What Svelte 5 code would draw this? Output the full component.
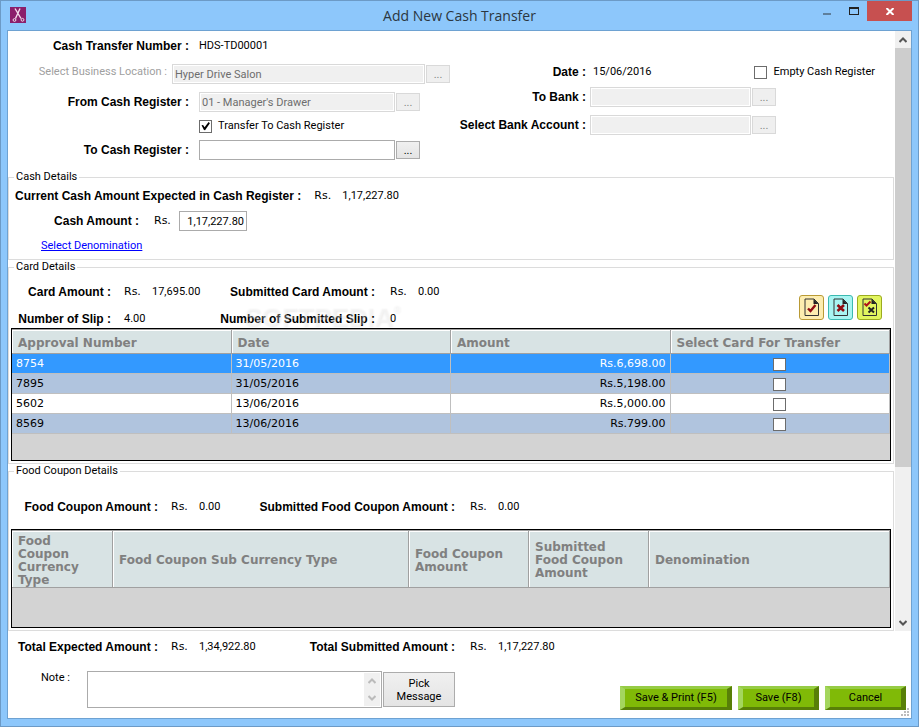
<script lang="ts">
  interface Card {
    approval: string;
    date: string;
    amount: string;
    checked: boolean;
  }

  let transferToRegister = $state(true);
  let emptyRegister = $state(false);
  let cashAmount = $state("1,17,227.80");
  let toRegister = $state("");
  let note = $state("");
  let selected = $state(0);

  let cards: Card[] = $state([
    { approval: "8754", date: "31/05/2016", amount: "Rs.6,698.00", checked: false },
    { approval: "7895", date: "31/05/2016", amount: "Rs.5,198.00", checked: false },
    { approval: "5602", date: "13/06/2016", amount: "Rs.5,000.00", checked: false },
    { approval: "8569", date: "13/06/2016", amount: "Rs.799.00", checked: false },
  ]);

  function setAll(fn: (c: Card) => boolean) {
    cards.forEach((c) => (c.checked = fn(c)));
  }
</script>

{#snippet chevron(up: boolean)}
  <svg class="chevron" class:down={!up} viewBox="0 0 8 6" aria-hidden="true">
    <path d="M0.5 5 L4 1.5 L7.5 5" />
  </svg>
{/snippet}

{#snippet page()}
  <path d="M6 4 H15 L19.5 8.5 V20.5 H6 Z" fill="none" stroke="#333" />
  <path d="M14.5 4 L19.5 9 H14.5 Z" fill="#222" />
{/snippet}

<div class="window">
  <header>
    <svg class="logo" viewBox="0 0 16 16" aria-hidden="true">
      <rect width="16" height="16" fill="#8b1f6b" />
      <g fill="none" stroke="#f3dcec">
        <path d="M5 1.5 L11 11.5 M10 1.5 L5.5 11.5" stroke-width="1.4" />
        <circle cx="4.5" cy="13" r="1.4" />
        <circle cx="12.5" cy="12.8" r="1.4" />
      </g>
    </svg>
    <h1>Add New Cash Transfer</h1>
    <div class="controls">
      <button class="min" aria-label="Minimize"><span></span></button>
      <button class="max" aria-label="Maximize"><span></span></button>
      <button class="close" aria-label="Close">
        <svg viewBox="0 0 8 7" aria-hidden="true">
          <path d="M0.5 0 L7.5 7 M7.5 0 L0.5 7" />
        </svg>
      </button>
    </div>
  </header>

  <main>
    <div class="scroller">
      <div class="content">
        <div class="form">
          <div class="left">
            <div class="row">
              <span class="label">Cash Transfer Number :</span>
              <span>HDS-TD00001</span>
            </div>
            <div class="row">
              <label class="label short" for="location">Select Business Location :</label>
              <input id="location" class="wide" value="Hyper Drive Salon" disabled />
              <button class="more" disabled>...</button>
            </div>
            <div class="row">
              <label class="label" for="from">From Cash Register :</label>
              <input id="from" value="01 - Manager's Drawer" disabled />
              <button class="more" disabled>...</button>
            </div>
            <div class="row check">
              <input id="transfer" type="checkbox" bind:checked={transferToRegister} />
              <label for="transfer">Transfer To Cash Register</label>
            </div>
            <div class="row">
              <label class="label" for="to">To Cash Register :</label>
              <input id="to" bind:value={toRegister} />
              <button class="more">...</button>
            </div>
          </div>

          <div class="right">
            <div class="row date">
              <span class="label">Date :</span>
              <span class="value">15/06/2016</span>
              <input id="empty" type="checkbox" bind:checked={emptyRegister} />
              <label for="empty">Empty Cash Register</label>
            </div>
            <div class="row">
              <label class="label" for="bank">To Bank :</label>
              <input id="bank" disabled />
              <button class="more" disabled>...</button>
            </div>
            <div class="row">
              <label class="label" for="account">Select Bank Account :</label>
              <input id="account" disabled />
              <button class="more" disabled>...</button>
            </div>
          </div>
        </div>

        <fieldset class="cash">
          <legend>Cash Details</legend>
          <div class="row expected">
            <b>Current Cash Amount Expected in Cash Register :</b>
            <span class="rs">Rs.</span>
            <span>1,17,227.80</span>
          </div>
          <div class="row entry">
            <label class="label" for="cash">Cash Amount :</label>
            <span class="rs">Rs.</span>
            <input id="cash" bind:value={cashAmount} />
          </div>
          <div class="row">
            <a href="#denomination">Select Denomination</a>
          </div>
        </fieldset>

        <fieldset>
          <legend>Card Details</legend>
          <div class="summary">
            <div class="stats cardstats">
              <b>Card Amount :</b>
              <span class="rs">Rs.</span>
              <span>17,695.00</span>
              <b>Submitted Card Amount :</b>
              <span class="rs">Rs.</span>
              <span>0.00</span>
              <b>Number of Slip :</b>
              <span class="span">4.00</span>
              <b>Number of Submitted Slip :</b>
              <span class="span">0</span>
            </div>
            <span class="watermark" aria-hidden="true">SOFTPEDIA<small>®</small></span>
            <div class="tools">
              <button class="all" aria-label="Select all" onclick={() => setAll(() => true)}>
                <svg viewBox="0 0 25 25">
                  {@render page()}
                  <path d="M9 13.5 L11.5 16 L16.5 10" fill="none" stroke="#900c12" stroke-width="2.4" />
                </svg>
              </button>
              <button class="none" aria-label="Clear all" onclick={() => setAll(() => false)}>
                <svg viewBox="0 0 25 25">
                  {@render page()}
                  <path d="M9.5 10 L16 16 M16 10 L9.5 16" stroke="#900c12" stroke-width="2.6" />
                </svg>
              </button>
              <button class="swap" aria-label="Invert selection" onclick={() => setAll((c) => !c.checked)}>
                <svg viewBox="0 0 25 25">
                  {@render page()}
                  <path d="M7.5 8.5 L9.5 10.5 L13.5 6.5" fill="none" stroke="#b01218" stroke-width="2" />
                  <path d="M11.5 12.5 L17 17.5 M17 12.5 L11.5 17.5" stroke="#222" stroke-width="2" />
                </svg>
              </button>
            </div>
          </div>

          <div class="grid cards">
            <table>
              <thead>
                <tr>
                  <th>Approval Number</th>
                  <th>Date</th>
                  <th>Amount</th>
                  <th>Select Card For Transfer</th>
                </tr>
              </thead>
              <tbody>
                {#each cards as card, i (card.approval)}
                  <tr class:selected={i === selected} onclick={() => (selected = i)}>
                    <td>{card.approval}</td>
                    <td>{card.date}</td>
                    <td class="amount">{card.amount}</td>
                    <td class="pick">
                      <input type="checkbox" aria-label={card.approval} bind:checked={card.checked} />
                    </td>
                  </tr>
                {/each}
              </tbody>
            </table>
          </div>
        </fieldset>

        <fieldset class="food">
          <legend>Food Coupon Details</legend>
          <div class="stats">
            <b>Food Coupon Amount :</b>
            <span class="rs">Rs.</span>
            <span>0.00</span>
            <b>Submitted Food Coupon Amount :</b>
            <span class="rs">Rs.</span>
            <span>0.00</span>
          </div>
          <div class="grid coupons">
            <table>
              <colgroup>
                <col class="c1" /><col class="c2" /><col class="c3" /><col class="c3" /><col />
              </colgroup>
              <thead>
                <tr>
                  <th>Food Coupon Currency Type</th>
                  <th>Food Coupon Sub Currency Type</th>
                  <th>Food Coupon Amount</th>
                  <th>Submitted Food Coupon Amount</th>
                  <th>Denomination</th>
                </tr>
              </thead>
            </table>
          </div>
        </fieldset>
      </div>

      <div class="scrollbar">
        <button aria-label="Scroll up">{@render chevron(true)}</button>
        <div class="track"><div class="thumb"></div></div>
        <button aria-label="Scroll down">{@render chevron(false)}</button>
      </div>
    </div>

    <footer>
      <div class="bottom">
        <div class="stats">
          <b>Total Expected Amount :</b>
          <span class="rs">Rs.</span>
          <span>1,34,922.80</span>
          <b>Total Submitted Amount :</b>
          <span class="rs">Rs.</span>
          <span>1,17,227.80</span>
        </div>
        <div class="note">
          <label for="note">Note :</label>
          <div class="notebox">
            <textarea id="note" bind:value={note}></textarea>
            <div class="scrollbar light">
              <button aria-label="Note up">{@render chevron(true)}</button>
              <button aria-label="Note down">{@render chevron(false)}</button>
            </div>
          </div>
          <button class="message">Pick Message</button>
        </div>
      </div>
      <div class="actions">
        <button class="print">Save &amp; Print (F5)</button>
        <button>Save (F8)</button>
        <button>Cancel</button>
      </div>
      <svg class="grip" viewBox="0 0 8 8" aria-hidden="true">
        <path d="M6 0h2v2h-2z M3 3h2v2h-2z M6 3h2v2h-2z M0 6h2v2h-2z M3 6h2v2h-2z M6 6h2v2h-2z" />
      </svg>
    </footer>
  </main>
</div>

<style>
  :global(body) {
    margin: 0;
  }

  .window {
    box-sizing: border-box;
    min-height: 100vh;
    display: flex;
    flex-direction: column;
    padding: 0 6px 7px;
    border: 1px solid #6c9ac6;
    background: #8dc7fb;
    color: #000;
    font: 11px/14px Roboto, "Liberation Sans", Arial, sans-serif;
  }

  input,
  button,
  textarea {
    box-sizing: border-box;
    margin: 0;
    font: inherit;
    color: inherit;
    border-radius: 0;
  }

  b,
  .label {
    font: bold 12px/14px "Liberation Sans", Arial, sans-serif;
  }

  .rs {
    font: 11px/14px "DejaVu Sans", Verdana, sans-serif;
  }

  /* title bar */
  header {
    display: grid;
    grid-template-columns: 1fr auto 1fr;
    height: 29px;
  }

  .logo {
    width: 16px;
    height: 16px;
    margin: 6px 0 0 3px;
  }

  h1 {
    margin: 5px 0 0;
    font: 14px/20px "Open Sans", "Segoe UI", sans-serif;
    color: #2b3640;
  }

  .controls {
    display: flex;
    justify-content: flex-end;
  }

  .controls button {
    width: 27px;
    height: 20px;
    padding: 0;
    border: 0;
    background: none;
    display: flex;
    justify-content: center;
    align-items: center;
  }

  .controls .min span {
    width: 8px;
    height: 2px;
    margin-top: 5px;
    background: #5e7f9c;
  }

  .controls .max span {
    box-sizing: border-box;
    width: 10px;
    height: 8px;
    border: 1px solid #222;
    border-top-width: 2px;
  }

  .controls .close {
    width: 45px;
    background: #c75050;
  }

  .close svg {
    width: 8px;
    height: 7px;
    stroke: #fff;
    stroke-width: 2;
  }

  main {
    flex: 1;
    display: flex;
    flex-direction: column;
    border: 1px solid #6ea2d2;
    background: #fff;
  }

  .scroller {
    display: flex;
  }

  .content {
    flex: 1;
    min-width: 0;
  }

  /* scroll bars */
  .scrollbar {
    display: flex;
    flex-direction: column;
    width: 16px;
    margin-left: 1px;
    background: #f0f0f0;
  }

  .scrollbar button {
    height: 17px;
    padding: 0;
    border: 0;
    background: none;
    display: flex;
    justify-content: center;
    align-items: center;
  }

  .track {
    flex: 1;
  }

  .thumb {
    height: 74%;
    background: #cdcdcd;
  }

  .chevron {
    width: 8px;
    height: 6px;
    fill: none;
    stroke: #555;
    stroke-width: 2;
  }

  .chevron.down {
    transform: scaleY(-1);
  }

  .light {
    justify-content: space-between;
    margin: 1px;
  }

  .light .chevron {
    stroke: #bbb;
  }

  /* top form */
  .form {
    display: flex;
    padding-bottom: 10px;
  }

  .left {
    display: flex;
    flex-direction: column;
    gap: 8px;
    width: 442px;
    padding-top: 5px;
  }

  .right {
    flex: 1;
    display: flex;
    flex-direction: column;
    gap: 8px;
    padding-top: 34px;
  }

  .row {
    display: flex;
    align-items: center;
    height: 20px;
  }

  .row .label {
    box-sizing: border-box;
    width: 191px;
    padding: 0 10px 0 0;
    text-align: right;
  }

  .row .label.short {
    width: 164px;
    padding: 0 5px 4px 0;
    font: inherit;
    color: #a0a0a0;
  }

  .row input:not([type]) {
    width: 196px;
    height: 20px;
    padding: 0 2px;
    border: 1px solid #ababab;
    background: #fff;
  }

  .row input:not([type]).wide {
    width: 253px;
  }

  .row input:not([type]):disabled {
    border-color: #d9d9d9;
    background: #f0f0f0;
    box-shadow: inset 0 0 0 1px #fff;
    color: #6d6d6d;
  }

  .more {
    width: 24px;
    height: 18px;
    margin-left: 1px;
    padding: 2px 0 0;
    border: 1px solid #acacac;
    background: linear-gradient(#f0f0f0, #e4e4e4);
  }

  .more:disabled {
    border-color: #d9d9d9;
    background: #efefef;
    color: #838383;
  }

  .check {
    height: 12px;
    padding-left: 191px;
  }

  input[type="checkbox"] {
    appearance: none;
    flex: none;
    width: 13px;
    height: 13px;
    border: 1px solid #6c6c6c;
    background: #fff;
  }

  input[type="checkbox"]:checked::before {
    content: "";
    display: block;
    width: 11px;
    height: 11px;
    background: #000;
    clip-path: polygon(14% 44%, 28% 40%, 42% 62%, 78% 14%, 90% 24%, 46% 88%, 36% 86%);
  }

  input[type="checkbox"] + label {
    margin-left: 6px;
  }

  .right .row .label {
    width: 140px;
    padding-right: 4px;
  }

  .right .row input:not([type]) {
    width: 161px;
  }

  .row.date {
    height: 14px;
    margin-right: 19px;
  }

  .date .value {
    flex: 1;
    padding-left: 3px;
  }

  /* group boxes */
  fieldset {
    min-width: 0;
    margin: 0;
    padding: 9px 2px 2px;
    border: 1px solid #dcdcdc;
  }

  legend {
    margin-left: 3px;
    padding: 0 2px;
  }

  .cash {
    display: flex;
    flex-direction: column;
    gap: 5px;
    padding: 2px 2px 3px;
  }

  .expected {
    padding-left: 4px;
  }

  .expected .rs {
    width: 28px;
    margin-left: 13px;
  }

  .entry .label {
    width: 143px;
    padding: 0 15px 0 0;
  }

  .entry .rs {
    width: 25px;
  }

  .row.entry input:not([type]) {
    width: 68px;
    text-align: right;
  }

  .cash a {
    margin-left: 30px;
    color: #00f;
  }

  .stats {
    display: grid;
    grid-template-columns: 160px 28px 60px 211px 28px auto;
    justify-content: start;
    align-items: center;
    row-gap: 9px;
    line-height: 18px;
  }

  .stats b {
    padding-right: 13px;
    text-align: right;
  }

  .stats b:nth-of-type(2n) {
    padding-right: 15px;
  }

  .cardstats {
    grid-template-columns: 113px 28px 58px 180px 28px auto;
  }

  .span {
    grid-column: span 2;
  }

  .summary {
    position: relative;
    display: flex;
    justify-content: space-between;
  }

  .watermark {
    position: absolute;
    left: 233px;
    top: 22px;
    font: bold 26px/24px "Liberation Sans", Arial, sans-serif;
    color: rgba(255, 255, 255, 0.3);
    text-shadow: 1px 1px 2px rgba(0, 0, 0, 0.07);
    pointer-events: none;
  }

  .watermark small {
    font-size: 10px;
    vertical-align: top;
    line-height: 10px;
  }

  .tools {
    display: flex;
    gap: 4px;
    align-self: flex-end;
    margin: 0 9px 8px 0;
  }

  .tools button {
    width: 25px;
    height: 25px;
    padding: 0;
    border: 1px solid #b99a35;
    border-radius: 3px;
    background: #fdedb0;
  }

  .tools svg {
    display: block;
    width: 25px;
    height: 25px;
    margin: -1px;
  }

  .tools .none {
    border-color: #3bb9b0;
    background: #a8f5f2;
  }

  .tools .swap {
    border-color: #9cab20;
    background: #e2f55f;
  }

  /* data grids */
  .grid {
    border: 1px solid #000;
    background: #d3d3d3;
    font: 11px/14px "DejaVu Sans", Verdana, sans-serif;
  }

  .cards {
    min-height: 131px;
  }

  .coupons {
    min-height: 97px;
    margin-top: 13px;
  }

  table {
    width: 100%;
    table-layout: fixed;
    border-collapse: separate;
    border-spacing: 0;
    border-top: 1px solid #a0a0a0;
  }

  th {
    height: 24px;
    box-sizing: border-box;
    padding: 3px 10px 0 6px;
    border-right: 1px solid #a0a0a0;
    border-bottom: 1px solid #a0a0a0;
    box-shadow: inset 1px 1px #fff;
    background: #d8e3e4;
    color: #808080;
    font-size: 12px;
    font-weight: bold;
    line-height: 13px;
    text-align: left;
    white-space: nowrap;
  }

  .coupons th {
    height: 57px;
    white-space: normal;
  }

  .c1 {
    width: 101px;
  }

  .c2 {
    width: 296px;
  }

  .c3 {
    width: 120px;
  }

  td {
    box-sizing: border-box;
    height: 20px;
    padding: 1px 4px 0;
    border-right: 1px solid #bfbfbf;
    border-bottom: 1px solid #bfbfbf;
    background: #fff;
  }

  tr:nth-child(2n) td {
    background: #b0c4de;
  }

  tr.selected td {
    background: #3399ff;
    color: #fff;
  }

  .amount {
    text-align: right;
  }

  .pick {
    text-align: center;
  }

  .pick input {
    display: block;
    margin: 0 auto;
  }

  .food {
    padding-top: 20px;
  }

  /* footer */
  footer {
    position: relative;
    flex: 1;
    display: flex;
    justify-content: space-between;
    padding: 7px 5px 8px 3px;
  }

  .note {
    display: flex;
    margin-top: 15px;
  }

  .note label {
    width: 46px;
    padding-left: 30px;
  }

  .notebox {
    display: flex;
    box-sizing: border-box;
    width: 295px;
    height: 37px;
    border: 1px solid #ababab;
  }

  textarea {
    flex: 1;
    min-width: 0;
    padding: 2px;
    border: 0;
    resize: none;
    overflow: hidden;
  }

  .message {
    width: 72px;
    height: 35px;
    margin: 1px;
    padding: 0 10px;
    border: 1px solid #acacac;
    background: linear-gradient(#f0f0f0, #e4e4e4);
    line-height: 13px;
  }

  .actions {
    display: flex;
    gap: 6px;
    align-self: flex-end;
  }

  .actions button {
    width: 81px;
    height: 24px;
    padding: 0;
    border: solid;
    border-width: 3px 5px;
    border-color: #96cc45 #587f08 #587f08 #a4d65e;
    background: #80ba07;
    line-height: 16px;
  }

  .actions .print {
    width: 112px;
  }

  .grip {
    position: absolute;
    right: 2px;
    bottom: 2px;
    width: 8px;
    height: 8px;
    fill: #bcbcbc;
  }
</style>
